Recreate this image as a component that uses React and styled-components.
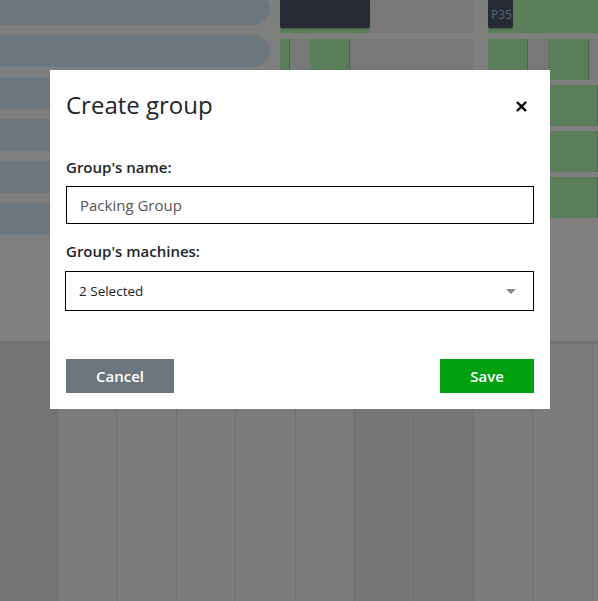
import styled, { createGlobalStyle } from "styled-components";

const GlobalStyle = createGlobalStyle`
  * { box-sizing: border-box; }
  html, body { margin: 0; padding: 0; }
  body {
    font-family: "Open Sans", "Noto Sans", sans-serif;
    color: #212529;
    overflow: hidden;
  }
`;

const Page = styled.div`
  height: 601px;
  background: #fff;
  display: flex;
  flex-direction: column;
  overflow: hidden;
`;

const TopArea = styled.div`
  height: 341px;
  display: flex;
  gap: 10px;
  flex-shrink: 0;
`;

const PillList = styled.div`
  width: 270px;
  display: flex;
  flex-direction: column;
  gap: 10px;
  margin-top: -7px;
`;

const Pill = styled.div`
  height: 32px;
  background: #d8eefa;
  border-radius: 0 16px 16px 0;
`;

const Board = styled.div`
  flex: 1;
  display: flex;
  gap: 15px;
`;

const Lane = styled.div`
  width: ${({ $w }) => $w}px;
  display: flex;
  flex-direction: column;
`;

const LaneHead = styled.div`
  height: 33px;
  display: flex;
  background: ${({ $bg }) => $bg};
  border-bottom: 6px solid #fff;
  box-sizing: content-box;
`;

const HeadBlock = styled.div`
  width: ${({ $w }) => $w}px;
  height: 28px;
  background: #4c546a;
  border-radius: 0 0 3px 3px;
  box-shadow: 0 1px 1px rgba(0, 0, 0, 0.3);
  color: #b4cbe0;
  font-size: 12px;
  padding: 6px 0 0 3px;
  overflow: hidden;
  white-space: nowrap;
`;

const HeadFill = styled.div`
  width: ${({ $w }) => $w}px;
  background: ${({ $bg }) => $bg};
`;

const Rows = styled.div`
  display: flex;
  flex-direction: column;
  gap: 5px;
`;

const Row = styled.div`
  height: 41px;
  display: flex;
  gap: 20px;
  background: #f0f0f0;
`;

const Slot = styled.div`
  width: ${({ $w }) => ($w ? `${$w}px` : "auto")};
  flex: ${({ $w }) => ($w ? "none" : 1)};
  background: #b4fab4;
  border-right: 1px solid #8fd08f;
`;

const BottomArea = styled.div`
  flex: 1;
  display: grid;
  grid-template-columns: 57px repeat(10, 59.4px);
  border-top: 3px solid #e4e4e4;
`;

const Column = styled.div`
  background: ${({ $tone }) => $tone};
  border-left: 1px solid #dddfdd;
  &:first-child { border-left: none; }
`;

const Backdrop = styled.div`
  position: fixed;
  inset: 0;
  background: rgba(0, 0, 0, 0.5);
  padding: 70px 0 0 50px;
`;

const Modal = styled.div`
  width: 500px;
  background: #fff;
  padding: 21px 16px 16px;
`;

const Header = styled.div`
  display: flex;
  justify-content: space-between;
  align-items: center;
  margin-bottom: 36px;
`;

const Title = styled.h2`
  margin: 0;
  font-size: 24px;
  font-weight: 400;
  line-height: 1.2;
  color: #212529;
`;

const CloseButton = styled.button`
  border: none;
  background: none;
  padding: 2px 7px 0;
  display: flex;
  cursor: pointer;
`;

const Field = styled.div`
  margin-bottom: ${({ $mb }) => $mb}px;
`;

const Label = styled.label`
  display: block;
  font-size: 15px;
  font-weight: 600;
  line-height: 1.5;
  color: #212529;
  margin-bottom: 8px;
`;

const TextInput = styled.input`
  display: block;
  width: 100%;
  height: 38px;
  border: 1px solid #000;
  padding: 0 13px;
  font-family: inherit;
  font-size: 15px;
  color: #555;
  outline: none;
`;

const SelectBox = styled.div`
  height: 40px;
  margin-left: -1px;
  border: 1px solid #000;
  display: flex;
  align-items: center;
  justify-content: space-between;
  padding: 0 17px 0 13px;
  font-size: 13.5px;
  color: #222;
`;

const Caret = styled.span`
  width: 0;
  height: 0;
  border-left: 5px solid transparent;
  border-right: 5px solid transparent;
  border-top: 5px solid #888;
  margin-top: 2px;
`;

const Footer = styled.div`
  display: flex;
  justify-content: space-between;
`;

const Button = styled.button`
  height: 34px;
  width: ${({ $w }) => $w}px;
  border: none;
  background: ${({ $bg }) => $bg};
  color: #fff;
  font-family: inherit;
  font-size: 15px;
  font-weight: 600;
  cursor: pointer;
`;

const columnTones = [
  "#e6e8e8", "#f6f8f6", "#f6f8f6", "#f6f8f6", "#f6f8f6", "#f6f8f6",
  "#eceef2", "#eceef2", "#f6f8f6", "#f6f8f6", "#f6f8f6",
];

export default function App() {
  return (
    <>
      <GlobalStyle />
      <Page>
        <TopArea>
          <PillList>
            {[0, 1, 2, 3, 4, 5].map((i) => (
              <Pill key={i} />
            ))}
          </PillList>
          <Board>
            <Lane $w={193}>
              <LaneHead $bg="#f0f0f0">
                <HeadFill $w={90} $bg="#b4fab4">
                  <HeadBlock $w={90} />
                </HeadFill>
              </LaneHead>
              <Rows>
                <Row>
                  <Slot $w={10} />
                  <Slot $w={40} />
                </Row>
              </Rows>
            </Lane>
            <Lane $w={110}>
              <LaneHead $bg="#b4fab4">
                <HeadBlock $w={25}>P35</HeadBlock>
              </LaneHead>
              <Rows>
                <Row>
                  <Slot $w={40} />
                  <Slot $w={41} />
                </Row>
                <Row><Slot /></Row>
                <Row><Slot /></Row>
                <Row><Slot /></Row>
              </Rows>
            </Lane>
          </Board>
        </TopArea>
        <BottomArea>
          {columnTones.map((tone, i) => (
            <Column key={i} $tone={tone} />
          ))}
        </BottomArea>
      </Page>

      <Backdrop>
        <Modal>
          <Header>
            <Title>Create group</Title>
            <CloseButton aria-label="Close">
              <svg width="11" height="11" viewBox="0 0 11 11">
                <path d="M1 1L10 10M10 1L1 10" stroke="#000" strokeWidth="2.4" />
              </svg>
            </CloseButton>
          </Header>
          <Field $mb={16}>
            <Label>Group's name:</Label>
            <TextInput defaultValue="Packing Group" />
          </Field>
          <Field $mb={48}>
            <Label>Group's machines:</Label>
            <SelectBox>
              <span>2 Selected</span>
              <Caret />
            </SelectBox>
          </Field>
          <Footer>
            <Button $w={108} $bg="#6c757d">Cancel</Button>
            <Button $w={94} $bg="#009f10">Save</Button>
          </Footer>
        </Modal>
      </Backdrop>
    </>
  );
}
